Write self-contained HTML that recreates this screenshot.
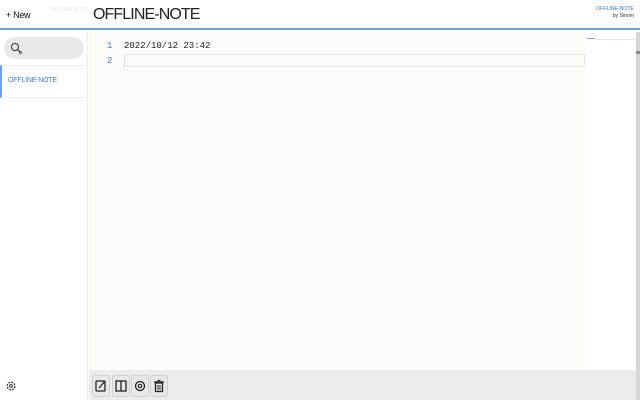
<!DOCTYPE html>
<html><head><meta charset="utf-8"><style>
*{margin:0;padding:0;box-sizing:border-box}
body{width:640px;height:400px;overflow:hidden;background:#fff;font-family:"Liberation Sans",sans-serif;position:relative}
.hdr{position:absolute;left:0;top:0;width:640px;height:30px;border-bottom:2px solid #6ea1e6;background:#fff}
.new{position:absolute;left:6px;top:10px;font-size:9px;color:#111;letter-spacing:-0.3px}
.ghost{position:absolute;left:50px;top:7px;font-size:5.5px;color:#dde6f2;letter-spacing:-0.2px}
.title{position:absolute;left:93px;top:6px;font-size:16px;color:#222;letter-spacing:-0.9px}
.brand{position:absolute;right:6px;top:6px;text-align:right;font-size:5.5px;color:#3a7bd5;line-height:7px;letter-spacing:-0.2px}
.brand span{color:#444}
.side{position:absolute;left:0;top:32px;width:88px;height:368px;background:#fff;border-right:1px solid #eee}
.search{position:absolute;left:4px;top:5px;width:80px;height:22px;border-radius:11px;background:#e9e9e9}
.item{position:absolute;left:0;top:33px;width:88px;height:33px;border-left:2px solid #6ea1e6;border-bottom:1px solid #eee;border-top:1px solid #eee;font-size:7px;color:#3a7bd5;padding:11px 0 0 6px;letter-spacing:-0.2px}
.ed{position:absolute;left:89px;top:32px;width:547px;height:338px;background:#fbfbf9}
.ln{position:absolute;left:107px;font-size:9px;color:#3a7bd5;font-family:"Liberation Mono",monospace}
.code{position:absolute;left:124px;font-size:9px;color:#222;font-family:"Liberation Mono",monospace}
.cur{position:absolute;left:124px;top:54px;width:461px;height:13px;border:1px solid #e6e6e6;border-left:1px solid #ddd}
.mini{position:absolute;left:585px;top:32px;width:51px;height:338px;background:#fff}
.sb{position:absolute;left:636px;top:32px;width:4px;height:368px;background:#d6d6d6}
.tb{position:absolute;left:89px;top:370px;width:547px;height:30px;background:#ececec}
.btn{position:absolute;top:375px;width:18px;height:22px;border:1px solid #cfcfcf;border-radius:3px;background:#e8e8e8}
</style></head><body>
<div class="hdr"><div class="new">+ New</div><div class="ghost">OFFLINE-NOTE</div><div class="title">OFFLINE-NOTE</div>
<div class="brand">OFFLINE-NOTE<br><span>by Sinom</span></div></div>
<div class="side"><div class="search"><svg width="22" height="22" style="position:absolute;left:2px;top:1px"><circle cx="9" cy="9" r="3.5" fill="none" stroke="#333" stroke-width="1"/><line x1="11.5" y1="11.5" x2="14" y2="14" stroke="#333" stroke-width="1.2"/><circle cx="14.5" cy="14.5" r="1" fill="none" stroke="#333" stroke-width="0.8"/></svg></div>
<div class="item">OFFLINE-NOTE</div>
<svg width="12" height="12" style="position:absolute;left:5px;top:348px"><circle cx="6" cy="6" r="3.8" fill="none" stroke="#333" stroke-width="1.3" stroke-dasharray="2 1"/><circle cx="6" cy="6" r="1.4" fill="none" stroke="#333"/></svg>
</div>
<div class="ed"></div>
<div class="ln" style="top:41px">1</div><div class="code" style="top:41px">2022/10/12 23:42</div>
<div class="ln" style="top:56px">2</div><div class="cur"></div>
<div class="mini"><div style="position:absolute;left:2px;top:6px;width:8px;height:1px;background:#999"></div><div style="position:absolute;left:10px;top:7px;width:41px;height:1px;background:#dce8f7"></div></div>
<div class="sb"><div style="height:3px;background:#888;margin-top:19px"></div></div>
<div class="tb"></div>
<div class="btn" style="left:92px"><svg width="16" height="20"><rect x="3" y="5" width="9" height="10" rx="1" fill="none" stroke="#222" stroke-width="1.3"/><line x1="6" y1="12" x2="12" y2="5" stroke="#222" stroke-width="1.3"/></svg></div>
<div class="btn" style="left:112px"><svg width="16" height="20"><rect x="3" y="5" width="10" height="10" fill="none" stroke="#222" stroke-width="1.3"/><line x1="8" y1="5" x2="8" y2="15" stroke="#222" stroke-width="1.3"/></svg></div>
<div class="btn" style="left:131px"><svg width="16" height="20"><circle cx="8" cy="10" r="4.5" fill="none" stroke="#222" stroke-width="1.3"/><circle cx="8" cy="10" r="1.7" fill="none" stroke="#222" stroke-width="1.2"/></svg></div>
<div class="btn" style="left:150px"><svg width="16" height="20"><rect x="4.5" y="7" width="7" height="8.5" fill="none" stroke="#222" stroke-width="1.3"/><line x1="3" y1="6" x2="13" y2="6" stroke="#222" stroke-width="1.3"/><line x1="6.5" y1="4.5" x2="9.5" y2="4.5" stroke="#222" stroke-width="1.2"/><line x1="7" y1="9" x2="7" y2="14" stroke="#222"/><line x1="9" y1="9" x2="9" y2="14" stroke="#222"/></svg></div>
</body></html>
